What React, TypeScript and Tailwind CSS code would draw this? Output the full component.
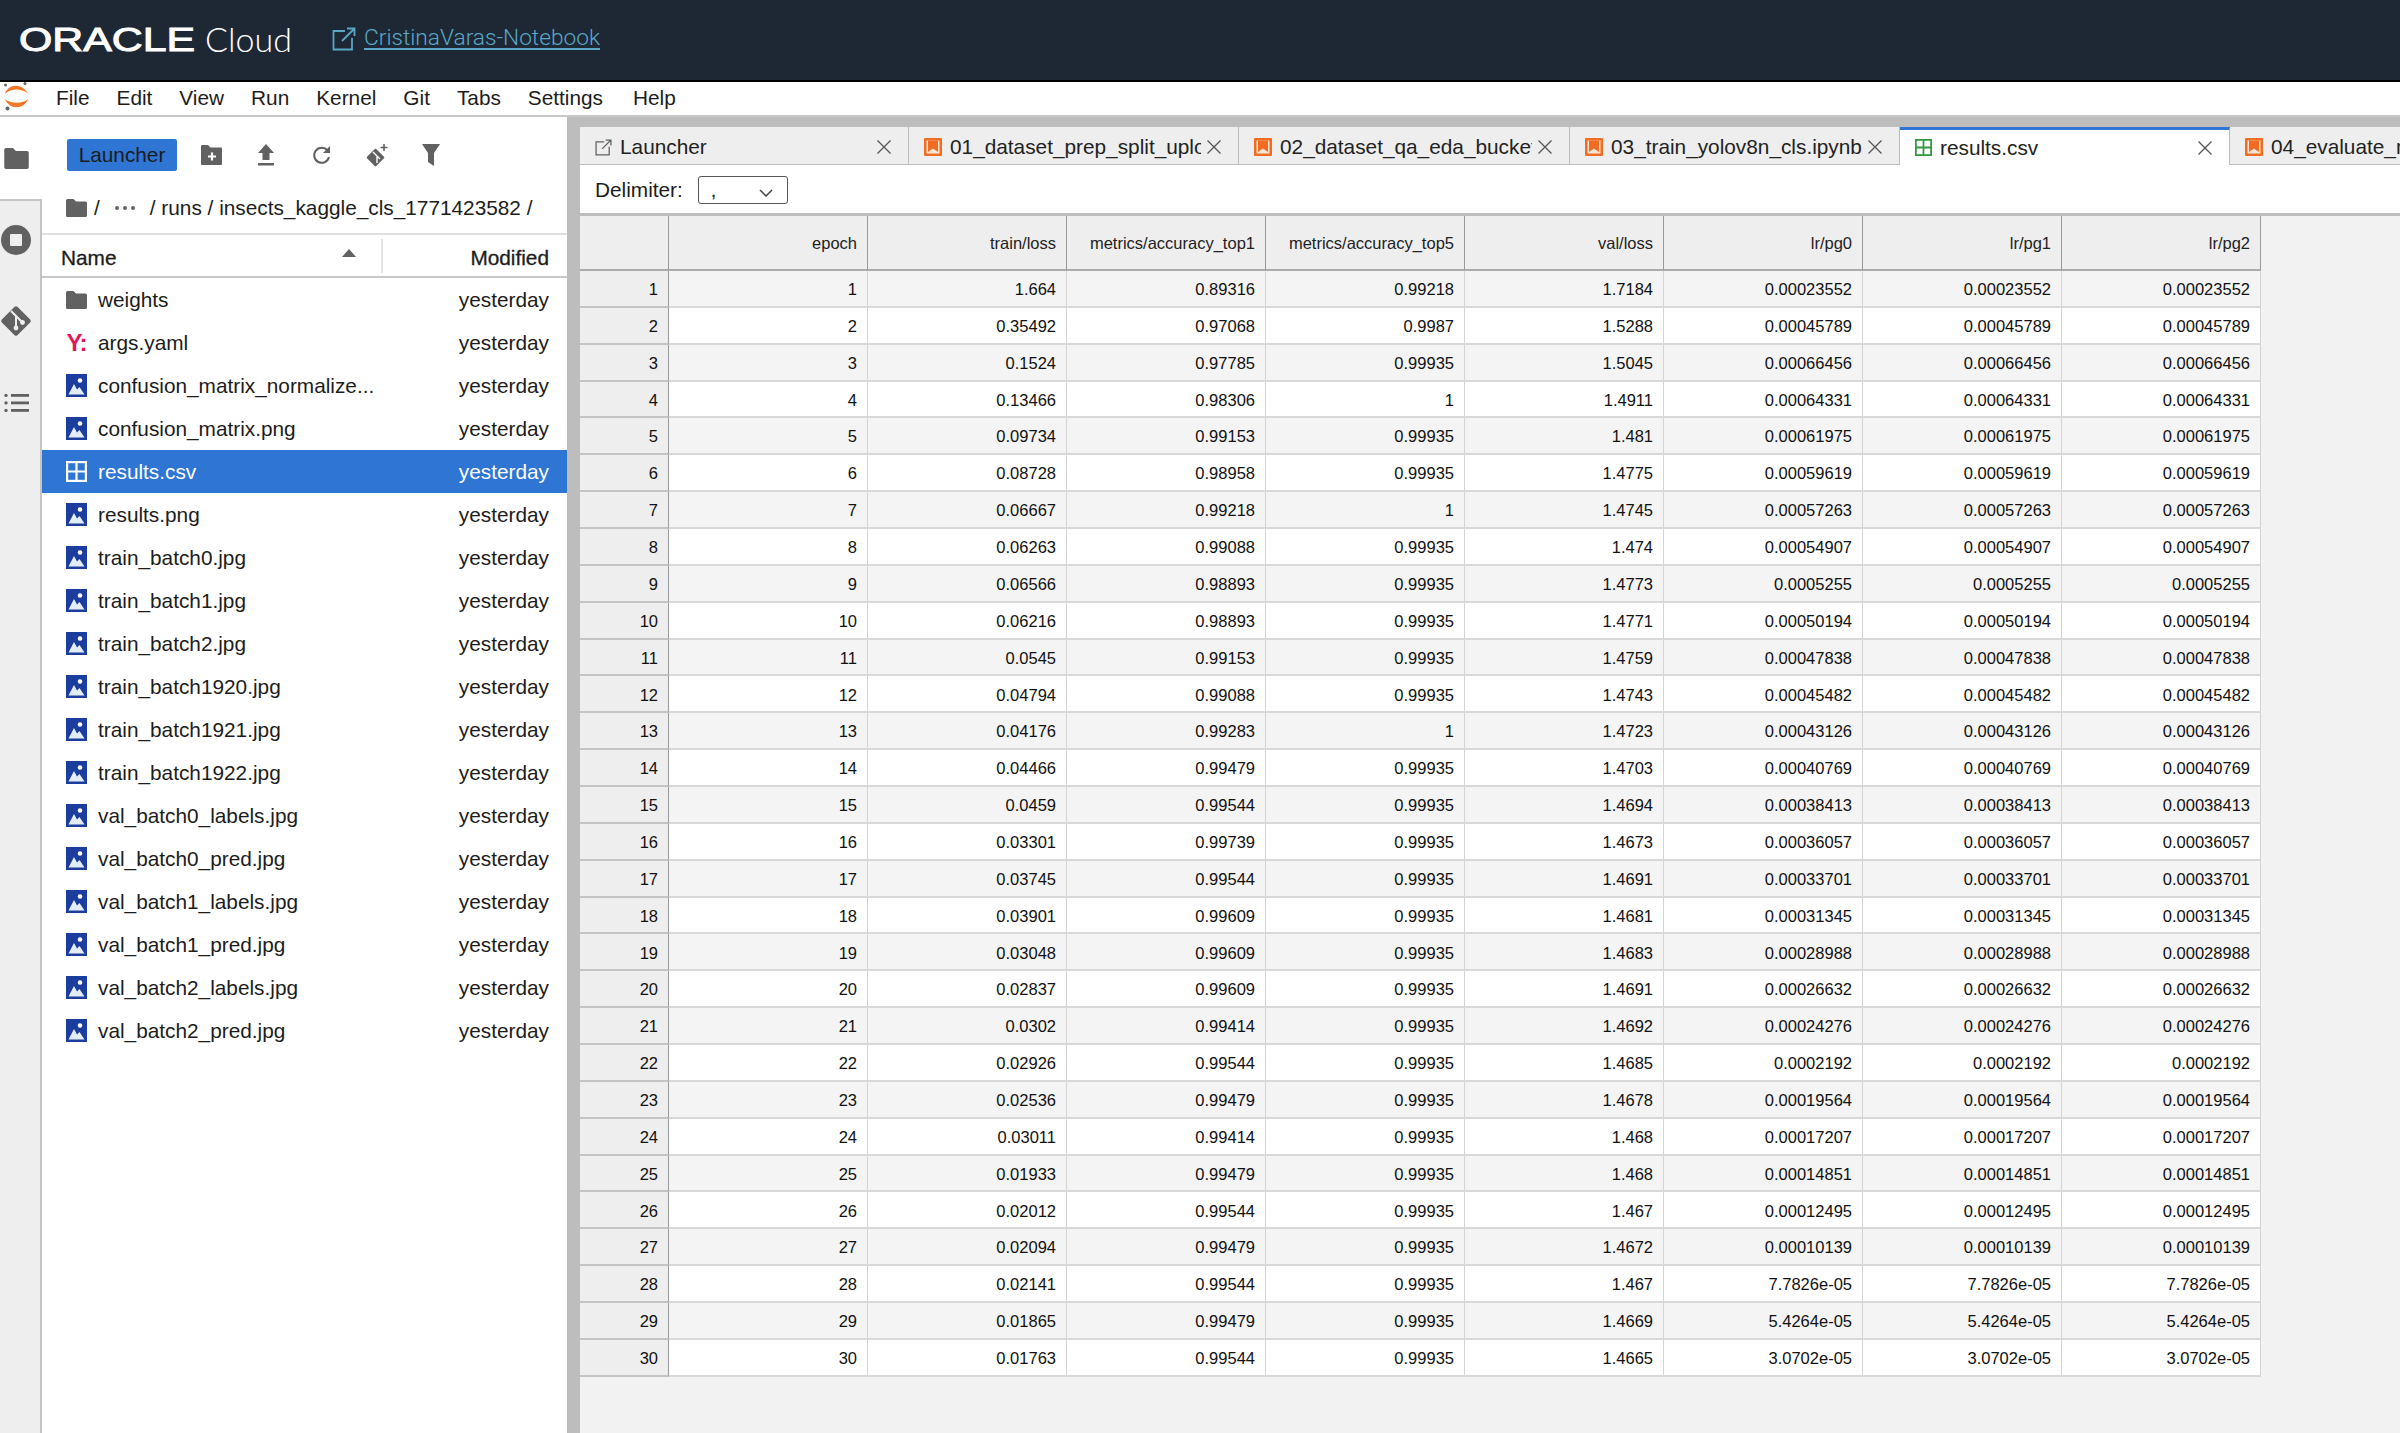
import React from "react";
const rows: string[][] = [
["1.664","0.89316","0.99218","1.7184","0.00023552"],["0.35492","0.97068","0.9987","1.5288","0.00045789"],["0.1524","0.97785","0.99935","1.5045","0.00066456"],["0.13466","0.98306","1","1.4911","0.00064331"],["0.09734","0.99153","0.99935","1.481","0.00061975"],["0.08728","0.98958","0.99935","1.4775","0.00059619"],["0.06667","0.99218","1","1.4745","0.00057263"],["0.06263","0.99088","0.99935","1.474","0.00054907"],["0.06566","0.98893","0.99935","1.4773","0.0005255"],["0.06216","0.98893","0.99935","1.4771","0.00050194"],["0.0545","0.99153","0.99935","1.4759","0.00047838"],["0.04794","0.99088","0.99935","1.4743","0.00045482"],["0.04176","0.99283","1","1.4723","0.00043126"],["0.04466","0.99479","0.99935","1.4703","0.00040769"],["0.0459","0.99544","0.99935","1.4694","0.00038413"],["0.03301","0.99739","0.99935","1.4673","0.00036057"],["0.03745","0.99544","0.99935","1.4691","0.00033701"],["0.03901","0.99609","0.99935","1.4681","0.00031345"],["0.03048","0.99609","0.99935","1.4683","0.00028988"],["0.02837","0.99609","0.99935","1.4691","0.00026632"],["0.0302","0.99414","0.99935","1.4692","0.00024276"],["0.02926","0.99544","0.99935","1.4685","0.0002192"],["0.02536","0.99479","0.99935","1.4678","0.00019564"],["0.03011","0.99414","0.99935","1.468","0.00017207"],["0.01933","0.99479","0.99935","1.468","0.00014851"],["0.02012","0.99544","0.99935","1.467","0.00012495"],["0.02094","0.99479","0.99935","1.4672","0.00010139"],["0.02141","0.99544","0.99935","1.467","7.7826e-05"],["0.01865","0.99479","0.99935","1.4669","5.4264e-05"],["0.01763","0.99544","0.99935","1.4665","3.0702e-05"]];
const headers = ["epoch","train/loss","metrics/accuracy_top1","metrics/accuracy_top5","val/loss","lr/pg0","lr/pg1","lr/pg2"];
const files: [string,string][] = [["weights","folder"],["args.yaml","yaml"],["confusion_matrix_normalize...","img"],["confusion_matrix.png","img"],["results.csv","csv"],["results.png","img"],["train_batch0.jpg","img"],["train_batch1.jpg","img"],["train_batch2.jpg","img"],["train_batch1920.jpg","img"],["train_batch1921.jpg","img"],["train_batch1922.jpg","img"],["val_batch0_labels.jpg","img"],["val_batch0_pred.jpg","img"],["val_batch1_labels.jpg","img"],["val_batch1_pred.jpg","img"],["val_batch2_labels.jpg","img"],["val_batch2_pred.jpg","img"]];

const FolderIcon = ({ w = 21, h = 18 }: { w?: number; h?: number }) => (
  <svg width={w} height={h} viewBox="0 0 21 18"><path d="M1.500 0h6l2.500 2.500h9.500a1.500 1.500 0 0 1 1.500 1.500v12.500a1.500 1.500 0 0 1-1.500 1.500h-18A1.500 1.500 0 0 1 0 16.500V1.500A1.500 1.500 0 0 1 1.500 0z" fill="#616161" /></svg>
);
const ImgIcon = () => (
  <svg width="21" height="23" viewBox="0 0 21 23"><rect width="21" height="23" fill="#1b3d9e" /><circle cx="14" cy="6.500" r="2.300" fill="#fff" /><path d="M2.500 20.500 8 10l3 5.500 2.500-2.500 5 7.500z" fill="#e3edf9" /></svg>
);
const CsvIcon = ({ c, s = 21 }: { c: string; s?: number }) => (
  <svg width={s} height={s} viewBox="0 0 21 21" fill="none" stroke={c} strokeWidth="2.200"><rect x="1.100" y="1.100" width="18.800" height="18.800" /><path d="M10.500 1v19M1 10.500h19" /></svg>
);
const NbIcon = () => (
  <svg width="18" height="18" viewBox="0 0 18 18"><rect width="18" height="18" rx="1" fill="#ef6c22" /><rect x="2.500" y="2.500" width="13" height="13" fill="#fde5d3" /><path d="M4 2.500h10v11.500l-5-3.500-5 3.500z" fill="#ef6c22" /></svg>
);
const X = () => (
  <svg width="16" height="16" viewBox="0 0 16 16" fill="none" stroke="#555" strokeWidth="1.300"><path d="M1.500 1.500l13 13M14.500 1.500l-13 13" /></svg>
);
const ExtIcon = ({ size, c }: { size: number; c: string }) => (
  <svg width={size} height={size} viewBox="0 0 24 24" fill="none" stroke={c} strokeWidth="1.800"><path d="M13 4H1.500v18.500H20V11" /><path d="M10 14 22.500 1.500M15 1.500h7.500V9" /></svg>
);

function Tab({ name, icon, active, w }: { name: string; icon: React.ReactNode; active?: boolean; w: string }) {
  return (
    <div className={`${w} shrink-0 h-full flex items-center pl-[15px] pr-[16px] gap-[8px] ${active ? "bg-white border-t-[3px] border-t-[#2e75d4] border-r border-r-[#bdbdbd]" : "bg-[#eeeeee] border-r border-b border-[#bdbdbd] pt-[3px]"}`}>
      <span className="shrink-0 flex">{icon}</span>
      <span className="flex-1 overflow-hidden whitespace-nowrap text-[20.800px] text-[#222]">{name}</span>
      <span className="shrink-0 flex ml-[-3px]"><X /></span>
    </div>
  );
}

export default function App() {
  return (
    <div className="w-[2400px] h-[1433px] overflow-hidden flex flex-col bg-white text-[#1c1c1c] font-['Liberation_Sans',Arial,sans-serif]">
      <header className="h-[82px] shrink-0 bg-[#1e2835] border-b-[2px] border-black flex items-center pl-[19px] pb-[3px] text-white">
        <span className="w-[186px] shrink-0 text-[34px] leading-none origin-left scale-x-[1.26] [-webkit-text-stroke:1px_#ffffff] font-['Liberation_Sans',sans-serif]">ORACLE</span>
        <span className="w-[127px] shrink-0 text-[34px] font-light leading-none font-['Lato',sans-serif]">Cloud</span>
        <span className="flex mr-[8px]"><ExtIcon size={24} c="#5ba6c6" /></span>
        <span className="text-[22.700px] font-light text-[#5ba6c6] underline underline-offset-[3px] font-['Roboto',sans-serif]">CristinaVaras-Notebook</span>
      </header>
      <nav className="h-[35px] shrink-0 border-b-[2px] border-[#c8c8c8] flex items-center">
        <span className="w-[56px] shrink-0 flex pl-[3px] self-start">
          <svg width="27" height="29" viewBox="0 0 27 29"><path d="M2 12C5 1 20 1 25 12 20 6 7 6 2 12zM2 17c4 11 19 11 23 0-5 5-18 5-23 0z" fill="#f37726" /><circle cx="2.500" cy="3" r="1.500" fill="#666" /><circle cx="22" cy="1.500" r="1.500" fill="#666" /><circle cx="4.500" cy="26.500" r="2" fill="#666" /></svg>
        </span>
        <div className="flex gap-[27px] text-[20.800px] pb-[2px]">
          {["File","Edit","View","Run","Kernel","Git","Tabs","Settings","Help"].map(m => <span key={m} className={m === "Help" ? "ml-[3px]" : ""}>{m}</span>)}
        </div>
      </nav>
      <div className="flex-1 flex min-h-0">
        <aside className="w-[42px] shrink-0 flex flex-col">
          <div className="h-[82px] shrink-0 flex justify-center pt-[31px] pr-[10px]"><FolderIcon w={25} h={21} /></div>
          <div className="flex-1 bg-[#eeeeee] border-t-[2px] border-r-[2px] border-[#c4c4c4] flex flex-col items-center pr-[8px]">
            <svg className="mt-[24px]" width="30" height="30" viewBox="0 0 30 30"><circle cx="15" cy="15" r="15" fill="#616161" /><rect x="9" y="9" width="12" height="12" rx="1" fill="#eee" /></svg>
            <svg className="mt-[49px]" width="34" height="34" viewBox="0 0 34 34"><rect x="6" y="6" width="22" height="22" rx="2" transform="rotate(45 17 17)" fill="#616161" /><path d="M12 7l5 5v12M17 12l6.500 6.500" stroke="#eee" strokeWidth="2" fill="none" /><circle cx="17" cy="24" r="2.400" fill="#eee" /><circle cx="23.500" cy="18.500" r="2.400" fill="#eee" /></svg>
            <svg className="mt-[55px]" width="25" height="20" viewBox="0 0 25 20" fill="#616161"><rect x="7" y="1" width="18" height="2.800" /><rect x="7" y="8.500" width="18" height="2.800" /><rect x="7" y="16" width="18" height="2.800" /><circle cx="2" cy="2.400" r="1.700" /><circle cx="2" cy="9.900" r="1.700" /><circle cx="2" cy="17.400" r="1.700" /></svg>
          </div>
        </aside>
        <section className="w-[525px] shrink-0 flex flex-col">
          <div className="h-[54px] shrink-0 flex items-end pl-[25px]">
            <span className="w-[110px] h-[32px] rounded-[2px] bg-[#2e75d4] text-[20.800px] flex items-center justify-center">Launcher</span>
            <div className="flex items-center ml-[24px] h-[32px]">
              <svg width="21" height="20" viewBox="0 0 21 20"><path d="M1 0h6l2.500 2.500H20a1 1 0 0 1 1 1V19a1 1 0 0 1-1 1H1a1 1 0 0 1-1-1V1a1 1 0 0 1 1-1z" fill="#616161" /><path d="M11 7.500v8M7 11.500h8" stroke="#fff" strokeWidth="2.200" /></svg>
              <svg className="ml-[36px]" width="16" height="22" viewBox="0 0 16 22" fill="#616161"><path d="M8 0l8 9h-4.500v7h-7V9H0z" /><rect y="19" width="16" height="2.500" /></svg>
              <svg className="ml-[38px]" width="20" height="20" viewBox="0 0 20 20" fill="none"><path d="M17 12a7.500 7.500 0 1 1-1.500-6.500" stroke="#616161" strokeWidth="2" /><path d="M18 1v7h-7z" fill="#616161" /></svg>
              <svg className="ml-[34px]" width="22" height="24" viewBox="0 0 22 24"><rect x="3" y="8" width="13" height="13" rx="1" transform="rotate(45 9.500 14.500)" fill="#616161" /><path d="M7 9l4 4v7M11 13l3 3" stroke="#fff" strokeWidth="1.400" fill="none" /><path d="M18 1v7M14.500 4.500h7" stroke="#616161" strokeWidth="1.600" /></svg>
              <svg className="ml-[34px]" width="18" height="22" viewBox="0 0 18 22"><path d="M0 0h18l-6 9v13l-6-4V9z" fill="#616161" /></svg>
            </div>
          </div>
          <div className="h-[64px] shrink-0 flex items-center pl-[24px] pt-[12px] text-[20.800px] border-b-[2px] border-[#e0e0e0]">
            <FolderIcon />
            <span className="ml-[7px]">/</span>
            <span className="ml-[15px] w-[20px] flex justify-between"><i className="w-[4px] h-[4px] rounded-full bg-[#616161]" /><i className="w-[4px] h-[4px] rounded-full bg-[#616161]" /><i className="w-[4px] h-[4px] rounded-full bg-[#616161]" /></span>
            <span className="ml-[15px]">/ runs / insects_kaggle_cls_1771423582 /</span>
          </div>
          <div className="h-[43px] shrink-0 flex items-center border-b-[2px] border-[#c8c8c8] text-[20.800px] font-medium">
            <span className="w-[339px] shrink-0 pl-[19px] pt-[4px] relative h-full flex items-center [-webkit-text-stroke:0.3px_#1c1c1c]">Name
              <svg className="absolute left-[300px] top-[14px]" width="14" height="9" viewBox="0 0 14 9"><path d="M7 0l7 8H0z" fill="#616161" /></svg>
            </span>
            <span className="flex-1 h-[34px] pt-[4px] border-l-[2px] border-[#e4e4e4] flex items-center justify-end pr-[18px] [-webkit-text-stroke:0.3px_#1c1c1c]">Modified</span>
          </div>
          <div className="flex-1 flex flex-col">
            {files.map(([n, k]) => {
              const sel = k === "csv";
              return (
                <div key={n} className={`h-[43px] shrink-0 flex items-center pl-[24px] pr-[18px] text-[20.800px] ${sel ? "bg-[#2e75d4] text-white" : ""}`}>
                  <span className="w-[21px] shrink-0 flex justify-center">
                    {k === "folder" ? <FolderIcon /> : k === "img" ? <ImgIcon /> : k === "csv" ? <CsvIcon c="#fff" /> : <span className="text-[#e0195c] font-bold text-[24px] leading-none tracking-[-1px]">Y:</span>}
                  </span>
                  <span className="ml-[11px] flex-1 whitespace-nowrap">{n}</span>
                  <span>yesterday</span>
                </div>
              );
            })}
          </div>
        </section>
        <div className="w-[13px] shrink-0 bg-[#bdbdbd]" />
        <main className="flex-1 min-w-0 flex flex-col bg-[#bdbdbd]">
          <div className="h-[10px] shrink-0" />
          <div className="h-[38px] shrink-0 flex overflow-hidden">
            <Tab w="w-[329px]" name="Launcher" icon={<ExtIcon size={17} c="#616161" />} />
            <Tab w="w-[330px]" name="01_dataset_prep_split_upload_to_bucket.ipynb" icon={<NbIcon />} />
            <Tab w="w-[331px]" name="02_dataset_qa_eda_bucket.ipynb" icon={<NbIcon />} />
            <Tab w="w-[330px]" name="03_train_yolov8n_cls.ipynb" icon={<NbIcon />} />
            <Tab active w="w-[330px]" name="results.csv" icon={<CsvIcon c="#2e9b3d" s={17} />} />
            <Tab w="w-[330px]" name="04_evaluate_model.ipynb" icon={<NbIcon />} />
          </div>
          <div className="h-[51px] shrink-0 bg-white flex items-center pl-[15px] pt-[2px] border-b-[3px] border-[#bdbdbd]">
            <span className="text-[20.800px]">Delimiter:</span>
            <span className="ml-[15px] w-[90px] h-[28px] border-[1.500px] border-[#555] rounded-[3px] flex items-center justify-between pl-[12px] pr-[14px] text-[20px] leading-none">
              <span>,</span>
              <svg width="14" height="8" viewBox="0 0 14 8" fill="none" stroke="#444" strokeWidth="1.500" className="mt-[6px]"><path d="M1 1l6 6 6-6" /></svg>
            </span>
          </div>
          <div className="flex-1 bg-[#f2f2f2] text-[16.500px] text-[#111]">
            <div className="grid grid-cols-[89px_repeat(8,199px)] w-[1681px]">
              <div className="h-[55px] bg-[#eeeeee] border-r border-b-[2px] border-r-[#999999] border-b-[#aaaaaa]" />
              {headers.map(h => (
                <div key={h} className="h-[55px] bg-[#eeeeee] border-r border-b-[2px] border-r-[#999999] border-b-[#aaaaaa] flex items-center justify-end pr-[10px] pt-[2px] text-[#222]">{h}</div>
              ))}
              {rows.map((r, i) => {
                const odd = i % 2 === 0;
                const bg = odd ? "bg-[#f4f4f4]" : "bg-white";
                const cells = [String(i + 1), r[0], r[1], r[2], r[3], r[4], r[4], r[4]];
                return (
                  <React.Fragment key={i}>
                    <div className="h-[36.870px] bg-[#eeeeee] border-r border-b-[2px] border-r-[#999999] border-b-[#c4c4c4] flex items-center justify-end pr-[10px] pt-[2px]">{i + 1}</div>
                    {cells.map((c, j) => (
                      <div key={j} className={`h-[36.870px] ${bg} border-r border-b-[2px] border-r-[#d4d4d4] border-b-[#d8d8d8] flex items-center justify-end pr-[10px] pt-[2px]`}>{c}</div>
                    ))}
                  </React.Fragment>
                );
              })}
            </div>
          </div>
        </main>
      </div>
    </div>
  );
}
